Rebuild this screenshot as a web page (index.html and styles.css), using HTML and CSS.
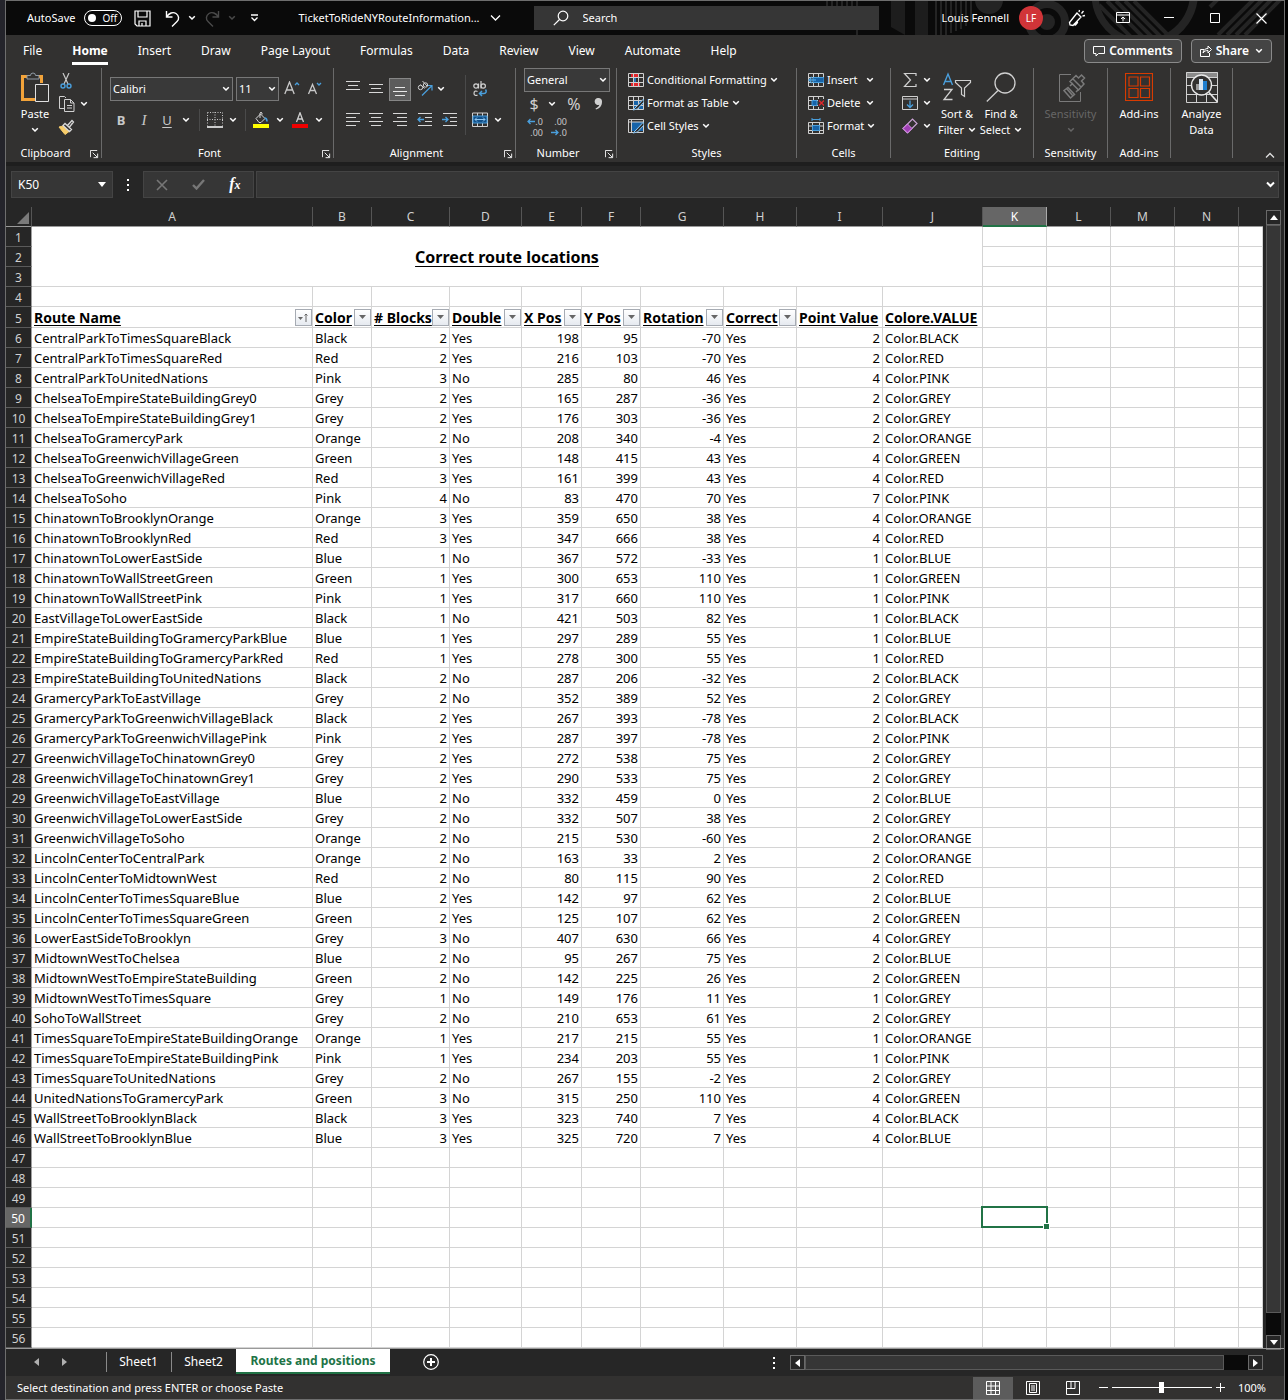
FILE: index.html
```html
<!DOCTYPE html>
<html lang="en">
<head>
<meta charset="utf-8">
<meta name="viewport" content="width=device-width, initial-scale=1">
<title>TicketToRideNYRouteInformation - Excel</title>
<link rel="stylesheet" href="styles.css">
</head>
<body>
<svg class="defs" aria-hidden="true">
  <symbol id="chev" viewBox="0 0 8 6"><path d="M1.2 1.2 4 4l2.800-2.800" fill="none" stroke="currentColor" stroke-width="1.500"/></symbol>
  <symbol id="launch" viewBox="0 0 10 10"><path d="M.5 8V.5H8M3 3l5 5M8.500 4v4.500H4" fill="none" stroke="currentColor"/></symbol>
  <symbol id="table" viewBox="0 0 16 16"><path d="M.5 1.500h15v13H.5zM.5 5.500h15M.5 10.500h15M5.500 1.500v13M10.500 1.500v13" fill="none" stroke="#d0d0d0"/></symbol>
</svg>

<div class="window">
  <header class="titlebar">
    <svg class="pattern" viewBox="0 0 470 34" aria-hidden="true">
      <g fill="none" stroke="#242424">
        <path d="M13 0v6M18 0v6M23 0v6M28 0v6M33 0v6M38 0v6M43 0v34" stroke-width="2"/>
        <path d="M122 0v34M127 0v34M132 0v34M137 0v32M142 0v30M147 0v28M152 0v25M157 0v21" stroke-width="2"/>
        <circle cx="233" cy="21" r="18" stroke-width="8"/>
        <path d="M285 4l34 34M293 0l38 38M302 0l38 38M311 0l38 38M320 0l38 38" stroke-width="4"/>
        <path d="M281-6a48 48 0 0 0 30 44" stroke-width="7"/>
        <path d="M380-6a50 50 0 0 1-30 44" stroke-width="8"/>
        <path d="M396 6l8-8M404 34l38-38M413 34l38-38M422 34l38-38M431 34l38-38" stroke-width="4"/>
      </g>
      <path d="M77 0h14v34l-14-8zM101 0h13v34h-13z" fill="#1d1d1d"/>
      <circle cx="175" cy="-1" r="14" fill="#242424"/><circle cx="233" cy="21" r="8" fill="#242424"/>
    </svg>
    <label class="autosave">AutoSave <span class="switch"><input type="checkbox" role="switch"><i></i><span>Off</span></span></label>
    <button class="tb w-save" aria-label="Save"><svg width="17" height="17" viewBox="0 0 17 17" fill="none" stroke="#fff" stroke-width="1.200"><path d="M1 1h15v15H3l-2-2zM4 1v6h9V1M5 16v-5h7v5M8 13v3"/></svg></button>
    <button class="tb w-undo" aria-label="Undo"><svg width="15" height="17" viewBox="0 0 15 17" fill="none" stroke="#fff" stroke-width="1.400"><path d="M1.500 1v6h6M1.500 7C4 3 8 1.500 11 3.500s3.500 5.500 1 8L7 16.500"/></svg></button>
    <button class="tb w-chev" aria-label="Undo options"><svg width="8" height="6"><use href="#chev"/></svg></button>
    <button class="tb w-undo dim" aria-label="Redo"><svg width="15" height="17" viewBox="0 0 15 17" fill="none" stroke="#4a4a4a" stroke-width="1.400"><path d="M13.500 1v6h-6M13.500 7C11 3 7 1.500 4 3.500s-3.500 5.500-1 8L8 16.500"/></svg></button>
    <button class="tb w-chev dim" aria-label="Redo options"><svg width="8" height="6"><use href="#chev"/></svg></button>
    <button class="tb w-custom" aria-label="Customize Quick Access Toolbar"><svg width="9" height="8" viewBox="0 0 9 8" fill="none" stroke="#fff" stroke-width="1.300"><path d="M1 1h7M1.500 3.500l3 3 3-3"/></svg></button>
    <button class="filename">TicketToRideNYRouteInformation...<svg width="11" height="8" viewBox="0 0 11 8" fill="none" stroke="#fff" stroke-width="1.300"><path d="M1 1.500 5.500 6 10 1.500"/></svg></button>
    <label class="search"><svg width="16" height="16" viewBox="0 0 16 16" fill="none" stroke="#fff" stroke-width="1.200"><circle cx="10" cy="6" r="4.800"/><path d="M6.500 9.500.8 15.200"/></svg><input type="search" placeholder="Search" aria-label="Search"></label>
    <div class="account">
      <span>Louis Fennell</span><span class="avatar">LF</span>
      <button class="tb w-sys" aria-label="Coming soon"><svg width="18" height="18" viewBox="0 0 18 18" fill="none" stroke="#fff" stroke-width="1.300"><path d="M9 4 1.500 13.500 2 16l3 .500L13 8zM5.500 15.500l2 .5 2-2.500-.5-1.500M11 3l.5-2M13.500 4.500l2-2.500M14.500 7l2.500-.5"/></svg></button>
      <button class="tb w-sys" aria-label="Ribbon display options"><svg width="14" height="12" viewBox="0 0 14 12" fill="none" stroke="#fff"><path d="M.5.5h13v10H.5zM.5 3h13M7 9.500V5M5 7l2-2 2 2"/></svg></button>
      <button class="tb w-sys" aria-label="Minimize"><svg width="10" height="10" viewBox="0 0 10 10" stroke="#fff"><path d="M0 4.500h10"/></svg></button>
      <button class="tb w-sys" aria-label="Maximize"><svg width="10" height="10" viewBox="0 0 10 10" fill="none" stroke="#fff"><path d="M.5.5h9v9h-9z"/></svg></button>
      <button class="tb w-sys" aria-label="Close"><svg width="11" height="11" viewBox="0 0 11 11" stroke="#fff" stroke-width="1.200"><path d="M.5.5l10 10M10.500.5l-10 10"/></svg></button>
    </div>
  </header>

  <nav class="tabs" aria-label="Ribbon tabs">
    <a href="#file">File</a><a href="#home" class="on" aria-current="page">Home</a><a href="#insert">Insert</a><a href="#draw">Draw</a><a href="#layout">Page Layout</a><a href="#formulas">Formulas</a><a href="#data">Data</a><a href="#review">Review</a><a href="#view">View</a><a href="#automate">Automate</a><a href="#help">Help</a>
    <div class="tabs-right">
      <button class="pill"><svg width="12" height="12" viewBox="0 0 12 12" fill="none" stroke="#fff"><path d="M.5 1.500h11v7h-6L3 11V8.500H.5z"/></svg>Comments</button>
      <button class="pill"><svg width="12" height="12" viewBox="0 0 12 12" fill="none" stroke="#fff"><path d="M4 4.500H.5v7h9V8M3 8c.5-3 2-4.500 5-4.500V1l3.500 3.500L8 8V5.500C6 5.500 4.500 6 3 8z"/></svg>Share<svg class="push" width="8" height="6"><use href="#chev"/></svg></button>
    </div>
  </nav>

  <section class="ribbon" aria-label="Home">
    <div class="group g-clip">
      <div class="body clip">
        <button class="big"><svg width="30" height="32" viewBox="0 0 30 32" fill="none"><path d="M7.500 5.500H2.500v23h13" stroke="#f2a33a" stroke-width="3"/><path d="M17 5.500h4.500V12" stroke="#f2a33a" stroke-width="3"/><path d="M7 8V4.500h3.500a2.500 2.500 0 0 1 5 0H19V8z" fill="#323130" stroke="#8f9aa5"/><path d="M15.500 13.500h13v17h-13z" fill="#323130" stroke="#e0e0e0"/></svg><span>Paste</span><svg width="8" height="6"><use href="#chev"/></svg></button>
        <div class="stack">
          <button class="ic" aria-label="Cut"><svg width="16" height="16" viewBox="0 0 16 16" fill="none"><path d="M5 0l5 11M11 0 6 11" stroke="#c8c8c8" stroke-width="1.200"/><circle cx="5" cy="13" r="2" stroke="#4a9fdc" stroke-width="1.400"/><circle cx="11" cy="13" r="2" stroke="#4a9fdc" stroke-width="1.400"/></svg></button><span></span>
          <button class="ic" aria-label="Copy"><svg width="17" height="16" viewBox="0 0 17 16" fill="none" stroke="#d0d0d0"><path d="M6 12.500H1.500V.5h5L8 2M6.500 3.500h6l3.500 3.500v8.500H6.500zM12.500 3.500V7H16M9 9.500h5M9 12h5"/></svg></button><button class="ic" aria-label="Copy options"><svg width="8" height="6"><use href="#chev"/></svg></button>
          <button class="ic" aria-label="Format Painter"><svg width="17" height="16" viewBox="0 0 17 16" fill="none"><path d="M1 8l4-1 6 5.500-4 3z" fill="#f7cd6b" stroke="#f7cd6b"/><path d="M5 6.500l6.500 6 2-2-6.500-6zM9.500 6.500 14 1.500l1.500 1.500-4 5" stroke="#d8d8d8" stroke-width="1.300"/></svg></button><span></span>
        </div>
      </div>
      <div class="cap more"><span>Clipboard</span><button aria-label="Clipboard settings"><svg width="9" height="9"><use href="#launch"/></svg></button></div>
    </div>

    <div class="group g-font">
      <div class="body">
        <div class="fontrow">
          <span class="combo"><select aria-label="Font"><option>Calibri</option></select><svg width="8" height="6"><use href="#chev"/></svg></span>
          <span class="combo"><select aria-label="Font size"><option>11</option></select><svg width="8" height="6"><use href="#chev"/></svg></span>
          <button class="ic" aria-label="Increase font size"><svg width="16" height="16" viewBox="0 0 16 16" fill="none"><path d="M.8 13 5.500 1 10.200 13M2.500 9h6" stroke="#c8c8c8" stroke-width="1.300"/><path d="M11 4l2-2 2 2" stroke="#4a9fdc" stroke-width="1.300"/></svg></button>
          <button class="ic" aria-label="Decrease font size"><svg width="16" height="16" viewBox="0 0 16 16" fill="none"><path d="M1.500 13 5.500 3.500 9.500 13M3 9.500h5" stroke="#c8c8c8" stroke-width="1.300"/><path d="M10 2l2 2 2-2" stroke="#4a9fdc" stroke-width="1.300"/></svg></button>
        </div>
        <div class="fontrow2">
          <button class="ic b">B</button><button class="ic i">I</button><button class="ic u">U</button><button class="ic" aria-label="Underline options"><svg width="8" height="6"><use href="#chev"/></svg></button><hr>
          <button class="ic" aria-label="Borders"><svg width="16" height="16" viewBox="0 0 16 16" fill="none" stroke="#c8c8c8"><path d="M.5.5h15M.5.5v13M15.500.5v13M8 0v14M0 7.500h16" stroke-dasharray="1 1.500"/><path d="M0 15h16" stroke="#fff" stroke-width="1.500"/></svg></button><button class="ic" aria-label="Border options"><svg width="8" height="6"><use href="#chev"/></svg></button><hr>
          <button class="ic" aria-label="Fill color"><svg width="16" height="16" viewBox="0 0 16 16" fill="none"><path d="M3 6.500 7.500 2l4.500 4.500-4 4H6zM7 6V1a1.200 1.200 0 0 1 2 0v1.500" stroke="#d8d8d8"/><path d="M11.500 6c1.500 0 2.500 1.500 2.500 3.500" stroke="#4a9fdc" stroke-width="1.600"/><path d="M0 12h16v4H0z" fill="#ff0"/></svg></button><button class="ic" aria-label="Fill options"><svg width="8" height="6"><use href="#chev"/></svg></button>
          <button class="ic" aria-label="Font color"><svg width="16" height="16" viewBox="0 0 16 16" fill="none"><path d="M4.500 10 8 .8 11.500 10M5.800 7h4.500" stroke="#d0d0d0" stroke-width="1.300"/><path d="M0 12h16v4H0z" fill="#f00000"/></svg></button><button class="ic" aria-label="Font color options"><svg width="8" height="6"><use href="#chev"/></svg></button>
        </div>
      </div>
      <div class="cap more"><span>Font</span><button aria-label="Font settings"><svg width="9" height="9"><use href="#launch"/></svg></button></div>
    </div>

    <div class="group g-align">
      <div class="body alignbody">
        <button class="ic" aria-label="Top align"><svg width="14" height="16" viewBox="0 0 14 16" stroke="#d8d8d8"><path d="M0 .5h14M2 4.500h10M0 8.500h14"/></svg></button>
        <button class="ic" aria-label="Middle align"><svg width="14" height="16" viewBox="0 0 14 16" stroke="#d8d8d8"><path d="M0 3.500h14M2 7.500h10M0 11.500h14"/></svg></button>
        <button class="ic pressed" aria-label="Bottom align" aria-pressed="true"><svg width="14" height="16" viewBox="0 0 14 16" stroke="#e8e8e8"><path d="M2 6.500h10M0 10.500h14M2 14.500h10"/></svg></button>
        <button class="ic" aria-label="Orientation"><svg width="16" height="16" viewBox="0 0 16 16" fill="none"><path d="M5 14.500 14.500 5M10 4.500h5v5" stroke="#4a9fdc" stroke-width="1.200"/><g stroke="#d0d0d0"><circle cx="3.500" cy="6.500" r="2.200"/><path d="M3.500 3.500l4 4"/><circle cx="8.500" cy="4" r="2.200"/><path d="M5.500 0l4.500 5"/></g></svg></button>
        <button class="ic start" aria-label="Orientation options"><svg width="8" height="6"><use href="#chev"/></svg></button>
        <hr class="tall">
        <button class="ic" aria-label="Wrap text"><svg width="16" height="18" viewBox="0 0 16 18" fill="none"><g stroke="#d0d0d0" stroke-width="1.200"><circle cx="4" cy="6" r="2.200"/><path d="M6.500 3.500v5M9 1v7.500"/><circle cx="11.200" cy="6" r="2.200"/><path d="M5.500 11.500c-1.500-1-3.500-.5-3.500 1.700s2 2.800 3.500 1.800"/></g><path d="M13.500 9.500c1.500 2 .5 4-1.500 4H7.500M10 11l-2.500 2.500L10 16" stroke="#4a9fdc" stroke-width="1.500"/></svg></button><span></span>

        <button class="ic" aria-label="Align left"><svg width="14" height="14" viewBox="0 0 14 14" stroke="#d8d8d8"><path d="M0 .5h14M0 4.500h10M0 8.500h14M0 12.500h10"/></svg></button>
        <button class="ic" aria-label="Center"><svg width="14" height="14" viewBox="0 0 14 14" stroke="#d8d8d8"><path d="M0 .5h14M2 4.500h10M0 8.500h14M2 12.500h10"/></svg></button>
        <button class="ic" aria-label="Align right"><svg width="14" height="14" viewBox="0 0 14 14" stroke="#d8d8d8"><path d="M0 .5h14M4 4.500h10M0 8.500h14M4 12.500h10"/></svg></button>
        <button class="ic" aria-label="Decrease indent"><svg width="15" height="14" viewBox="0 0 15 14" fill="none" stroke="#d8d8d8"><path d="M1 .5h14M8 4.500h7M8 8.500h7M1 12.500h14"/><path d="M7 6.500H1M3.500 4 1 6.500 3.500 9" stroke="#4a9fdc" stroke-width="1.300"/></svg></button>
        <button class="ic" aria-label="Increase indent"><svg width="15" height="14" viewBox="0 0 15 14" fill="none" stroke="#d8d8d8"><path d="M1 .5h14M8 4.500h7M8 8.500h7M1 12.500h14"/><path d="M0 6.500h6M3.500 4 6 6.500 3.500 9" stroke="#4a9fdc" stroke-width="1.300"/></svg></button>
        <button class="ic" aria-label="Merge and center"><svg width="16" height="16" viewBox="0 0 16 16" fill="none"><path d="M.5 1h15v13.500H.5zM5.500 1v3M10.500 1v3M5.500 11v3.500M10.500 11v3.500" stroke="#d0d0d0"/><path d="M1 4h14v7H1z" fill="#12518a" stroke="#4a9fdc"/><path d="M3 7.500h10M5 5.500l-2 2 2 2M11 5.500l2 2-2 2" stroke="#8fc6f0"/></svg></button>
        <button class="ic" aria-label="Merge options"><svg width="8" height="6"><use href="#chev"/></svg></button>
      </div>
      <div class="cap more"><span>Alignment</span><button aria-label="Alignment settings"><svg width="9" height="9"><use href="#launch"/></svg></button></div>
    </div>

    <div class="group g-num">
      <div class="body numbody">
        <span class="combo"><select aria-label="Number format"><option>General</option></select><svg width="8" height="6"><use href="#chev"/></svg></span>
        <div class="numrow"><button class="ic sym">$</button><button class="ic" aria-label="Accounting options"><svg width="8" height="6"><use href="#chev"/></svg></button><button class="ic sym">%</button><button class="ic" aria-label="Comma style"><svg width="9" height="12" viewBox="0 0 9 12"><path d="M4.500 0a3.500 3.500 0 0 1 3.500 3.700C8 8 5.500 10.500 2 11.500l-.5-1C3.500 9.500 5 8.500 5.300 6.800A3.500 3.500 0 1 1 4.500 0z" fill="#d0d0d0"/></svg></button></div>
        <div class="numrow2">
          <button class="ic dec" aria-label="Increase decimal"><svg width="8" height="7" viewBox="0 0 8 7" fill="none" stroke="#4a9fdc" stroke-width="1.300"><path d="M8 3.500H1M3.500 1 1 3.500 3.500 6"/></svg><span>.0</span><span class="wide">.00</span></button>
          <button class="ic dec" aria-label="Decrease decimal"><span class="wide">.00</span><svg width="8" height="7" viewBox="0 0 8 7" fill="none" stroke="#4a9fdc" stroke-width="1.300"><path d="M0 3.500h7M4.500 1 7 3.500 4.500 6"/></svg><span>.0</span></button>
        </div>
      </div>
      <div class="cap more"><span>Number</span><button aria-label="Number settings"><svg width="9" height="9"><use href="#launch"/></svg></button></div>
    </div>

    <div class="group g-styles">
      <div class="body list">
        <button class="item"><svg width="16" height="16" viewBox="0 0 16 16"><path d="M3 1.500h7v4H3zM3 10.500h9v4H3z" fill="#e0262c"/><path d="M5 6h3v4H5z" fill="#2374b8"/><use href="#table"/></svg>Conditional Formatting<svg width="8" height="6"><use href="#chev"/></svg></button>
        <button class="item"><svg width="16" height="16" viewBox="0 0 16 16"><path d="M5 5h11v10H5z" fill="#1763a8"/><use href="#table"/><path d="M15.500 4 8 12l-3 3 4.500-1L16 7z" fill="#323130" stroke="#8fc6f0"/></svg>Format as Table<svg width="8" height="6"><use href="#chev"/></svg></button>
        <button class="item"><svg width="16" height="16" viewBox="0 0 16 16"><path d="M3 4h12v9H3z" fill="#1763a8"/><path d="M.5 1.500h15v13H.5zM.5 4h15M3.500 1.500v13" fill="none" stroke="#d0d0d0"/><path d="M15.500 4 8 12l-3 3 4.500-1L16 7z" fill="#323130" stroke="#8fc6f0"/></svg>Cell Styles<svg width="8" height="6"><use href="#chev"/></svg></button>
      </div>
      <div class="cap"><span>Styles</span></div>
    </div>

    <div class="group g-cells">
      <div class="body list">
        <button class="item"><svg width="16" height="16" viewBox="0 0 16 16" fill="none"><use href="#table"/><path d="M5 5.500h11v5H5z" fill="#1763a8" stroke="#4a9fdc"/><path d="M8 8H1M4 5 1 8l3 3" stroke="#4a9fdc" stroke-width="1.300"/></svg>Insert<svg class="push" width="8" height="6"><use href="#chev"/></svg></button>
        <button class="item"><svg width="16" height="16" viewBox="0 0 16 16" fill="none"><use href="#table"/><path d="M4 5.500h5v5H4z" fill="#1763a8" stroke="#4a9fdc"/><path d="M10 4h6v8h-6z" fill="#323130"/><path d="M11 5.500l5 5M16 5.500l-5 5" stroke="#e0262c" stroke-width="1.300"/></svg>Delete<svg class="push" width="8" height="6"><use href="#chev"/></svg></button>
        <button class="item"><svg width="16" height="16" viewBox="0 0 16 16" fill="none"><path d="M.5 4.500h15v11H.5zM.5 8h15M.5 12.500h15M4.500 4.500v11M11.500 4.500v11" stroke="#d0d0d0"/><path d="M4.500 7.500h7v5h-7z" fill="#1763a8" stroke="#4a9fdc"/><path d="M4 0v3M12 0v3M4 1.500h8" stroke="#4a9fdc"/></svg>Format<svg class="push" width="8" height="6"><use href="#chev"/></svg></button>
      </div>
      <div class="cap"><span>Cells</span></div>
    </div>

    <div class="group g-edit">
      <div class="body editbody">
        <div class="list">
          <button class="item" aria-label="AutoSum"><svg width="16" height="16" viewBox="0 0 16 16" fill="none" stroke="#d0d0d0" stroke-width="1.200"><path d="M14 4V1.500H2.500l6 6.500-6 6.500H14V12"/></svg><svg width="8" height="6"><use href="#chev"/></svg></button>
          <button class="item" aria-label="Fill"><svg width="16" height="16" viewBox="0 0 16 16" fill="none"><path d="M.5 1.500h15v13H.5zM.5 4h15" stroke="#d0d0d0"/><path d="M8 5.500V12M5 9.500l3 3 3-3" stroke="#4a9fdc" stroke-width="1.300"/></svg><svg width="8" height="6"><use href="#chev"/></svg></button>
          <button class="item" aria-label="Clear"><svg width="16" height="16" viewBox="0 0 16 16" fill="none"><path d="M1 10.500 10.500 1 15 5.500 5.500 15z" stroke="#c9a3d4" stroke-width="1.200"/><path d="M1 10.500l4.500-4.500L10 10.500 5.500 15z" fill="#a03fb5" stroke="#d890e8"/></svg><svg width="8" height="6"><use href="#chev"/></svg></button>
        </div>
        <button class="big"><svg width="30" height="32" viewBox="0 0 30 32" fill="none"><path d="M1.500 14 6 3l4.500 11M3 10.500h6" stroke="#4a9fdc" stroke-width="1.400"/><path d="M2 18.500h8L2 28.500h8.500" stroke="#d0d0d0" stroke-width="1.300"/><path d="M13.500 9.500h15v2L22.500 17v8.500l-3-2V17l-6-5.500z" stroke="#d0d0d0" stroke-width="1.200"/></svg><span>Sort &amp;</span><span>Filter <svg width="8" height="6"><use href="#chev"/></svg></span></button>
        <button class="big"><svg width="30" height="32" viewBox="0 0 30 32" fill="none" stroke="#d0d0d0" stroke-width="1.300"><circle cx="19" cy="12" r="10"/><path d="M12 19.500.8 30.500"/></svg><span>Find &amp;</span><span>Select <svg width="8" height="6"><use href="#chev"/></svg></span></button>
      </div>
      <div class="cap"><span>Editing</span></div>
    </div>

    <div class="group g-sens">
      <div class="body"><button class="big off" disabled><svg width="30" height="32" viewBox="0 0 30 32" fill="none" stroke="#7a7a7a"><path d="M15 3.500H3.500v27h21V21"/><path d="M8 19.500l4-3 6.500 7-4 3.500z M11 18l6 7 M14 15l3-3 M20 21l2-2M14 10.500l6-6 2.500 2.500 3-3 3 3-3 3 2.500 3-5.500 6z M17 8l8 8" stroke-width="1.500"/></svg><span>Sensitivity</span><svg width="8" height="6"><use href="#chev"/></svg></button></div>
      <div class="cap"><span>Sensitivity</span></div>
    </div>
    <div class="group g-add">
      <div class="body"><button class="big"><svg width="28" height="32" viewBox="0 0 28 32" fill="none" stroke="#d83b01" stroke-width="1.200"><path d="M.5 2.500h27v27H.5zM4 6h9v9H4zM15.500 6h9v9h-9zM4 17.500h9v9H4zM15.500 17.500h9v9h-9z"/></svg><span>Add-ins</span></button></div>
      <div class="cap"><span>Add-ins</span></div>
    </div>
    <div class="group g-data">
      <div class="body"><button class="big"><svg width="32" height="32" viewBox="0 0 32 32" fill="none"><path d="M0 1h32v5H0z" fill="#8a8a8a"/><path d="M.5 1.500h31v30H.5zM0 6.500h32M0 14.500h6M26 14.500h6M0 23.500h32M10.500 23v8M20.500 23v8" stroke="#d0d0d0"/><circle cx="15.500" cy="14" r="10" fill="#323130" stroke="#e8e8e8" stroke-width="1.400"/><path d="M10 13h3v6h-3z" fill="#9a9a9a"/><path d="M13 8h4v11h-4z" fill="#d8e6f2"/><path d="M17 10h4v9h-4z" fill="#1f7fd0"/><path d="M23 21.500l8.500 9.500" stroke="#e8e8e8" stroke-width="1.600"/></svg><span>Analyze</span><span>Data</span></button></div>
      <div class="cap"></div>
    </div>
    <button class="collapse" aria-label="Collapse the ribbon"><svg width="10" height="7" viewBox="0 0 10 7" fill="none" stroke="#e0e0e0" stroke-width="1.300"><path d="M1 5.500l4-4 4 4"/></svg></button>
  </section>

  <div class="formula">
    <span class="namebox"><input value="K50" aria-label="Name box"><svg width="8" height="5" viewBox="0 0 8 5"><path d="M0 0h8L4 5z" fill="#fff"/></svg></span>
    <svg class="dots" width="3" height="12" viewBox="0 0 3 12" fill="#fff"><path d="M0 0h2v2H0zM0 5h2v2H0zM0 10h2v2H0z"/></svg>
    <div class="fxbox">
      <button aria-label="Cancel"><svg width="12" height="12" viewBox="0 0 12 12" stroke="#777" stroke-width="1.600"><path d="M1 1l10 10M11 1 1 11"/></svg></button>
      <button aria-label="Enter"><svg width="13" height="11" viewBox="0 0 13 11" fill="none" stroke="#777" stroke-width="2.400"><path d="M1 6l3.500 3.500L12 1"/></svg></button>
      <button class="fx">f<small>x</small></button>
    </div>
    <span class="fbar"><input aria-label="Formula bar"><svg width="9" height="7" viewBox="0 0 9 7" fill="none" stroke="#fff" stroke-width="2"><path d="M1 1.500 4.500 5 8 1.500"/></svg></span>
  </div>

  <main class="sheet">
    <table class="grid" id="grid">
      <colgroup><col class="c-n"><col class="c-a"><col class="c-b"><col class="c-c"><col class="c-d"><col class="c-e"><col class="c-b"><col class="c-g"><col class="c-h"><col class="c-i"><col class="c-j"><col class="c-k"><col class="c-k"><col class="c-k"><col class="c-k"><col></colgroup>
      <thead><tr><th class="corner"><svg width="12" height="12" viewBox="0 0 12 12"><path d="M12 0v12H0z" fill="#7a7a7a"/></svg></th><th>A</th><th>B</th><th>C</th><th>D</th><th>E</th><th>F</th><th>G</th><th>H</th><th>I</th><th>J</th><th class="sel">K</th><th>L</th><th>M</th><th>N</th><th class="last"></th></tr></thead>
      <tbody></tbody>
    </table>
    <div class="vscroll">
      <button aria-label="Scroll up"><svg width="8" height="5" viewBox="0 0 8 5"><path d="M0 5h8L4 0z" fill="#fff"/></svg></button>
      <div class="thumb"></div><div class="gap"></div>
      <button aria-label="Scroll down"><svg width="8" height="5" viewBox="0 0 8 5"><path d="M0 0h8L4 5z" fill="#fff"/></svg></button>
    </div>
  </main>

  <div class="sheets">
    <button class="nav" aria-label="Previous sheet"><svg width="5" height="8" viewBox="0 0 5 8"><path d="M5 0v8L0 4z" fill="#b0b0b0"/></svg></button>
    <button class="nav" aria-label="Next sheet"><svg width="5" height="8" viewBox="0 0 5 8"><path d="M0 0v8l5-4z" fill="#b0b0b0"/></svg></button>
    <button class="sheet-tab">Sheet1</button><button class="sheet-tab">Sheet2</button><button class="sheet-tab active">Routes and positions</button>
    <button class="add" aria-label="New sheet"><svg width="16" height="16" viewBox="0 0 16 16" fill="none" stroke="#fff"><circle cx="8" cy="8" r="7.300" stroke-width="1.200"/><path d="M4 8h8M8 4v8" stroke-width="2"/></svg></button>
    <svg class="dots" width="3" height="12" viewBox="0 0 3 12" fill="#fff"><path d="M0 0h2v2H0zM0 5h2v2H0zM0 10h2v2H0z"/></svg>
    <div class="hscroll">
      <button aria-label="Scroll left"><svg width="5" height="8" viewBox="0 0 5 8"><path d="M5 0v8L0 4z" fill="#fff"/></svg></button>
      <div class="thumb"></div><div class="gap"></div>
      <button aria-label="Scroll right"><svg width="5" height="8" viewBox="0 0 5 8"><path d="M0 0v8l5-4z" fill="#fff"/></svg></button>
    </div>
  </div>

  <footer class="status">
    <span class="msg">Select destination and press ENTER or choose Paste</span>
    <button class="view on" aria-label="Normal view"><svg width="14" height="14" viewBox="0 0 14 14" fill="none" stroke="#fff"><path d="M.5.500h13v13H.5zM5 .5v13M9.500.5v13M.5 5h13M.5 9.500h13"/></svg></button>
    <button class="view" aria-label="Page layout view"><svg width="14" height="14" viewBox="0 0 14 14" fill="none" stroke="#fff"><path d="M.5.500h13v13H.5zM3.500 2.500h7v9h-7zM5 5h4M5 7h4M5 9h4"/></svg></button>
    <button class="view" aria-label="Page break preview"><svg width="14" height="14" viewBox="0 0 14 14" fill="none" stroke="#fff"><path d="M.5.500h13v13H.5zM5 .5v7M9 .5v7M.5 7.500H9"/></svg></button>
    <button class="zoom" aria-label="Zoom out"><svg width="9" height="9" viewBox="0 0 9 9" stroke="#fff"><path d="M0 4.500h9"/></svg></button>
    <input class="slider" type="range" min="0" max="100" value="50" aria-label="Zoom">
    <button class="zoom" aria-label="Zoom in"><svg width="9" height="9" viewBox="0 0 9 9" stroke="#fff"><path d="M0 4.500h9M4.500 0v9"/></svg></button>
    <button class="pct">100%</button>
  </footer>
</div>
<script src="app.js"></script>
</body>
</html>
```
FILE: styles.css
```css
* { box-sizing: border-box; }
body { margin: 0; min-height: 100vh; background: #000; border-left: 5px solid #24242b; color: #fff; font: 11px/16px "Noto Sans", "Open Sans", sans-serif; }
button, input, select { font: inherit; color: inherit; background: none; border: 0; padding: 0; margin: 0; }
button { display: flex; align-items: center; justify-content: center; }
svg { display: block; flex: none; }
a { color: inherit; text-decoration: none; }
.defs { position: absolute; width: 0; height: 0; }
.window { margin-right: 3px; min-height: 100vh; border: 1px solid #6e6e6e; background: #262626; display: flex; flex-direction: column; }

/* title bar */
.titlebar { position: relative; display: flex; align-items: center; height: 34px; background: #0a0a0a; padding-left: 21px; overflow: hidden; }
.titlebar > * { position: relative; flex: none; }
.titlebar > .pattern { position: absolute; right: 0; top: 0; width: 470px; height: 34px; }
.autosave { display: flex; align-items: center; gap: 9px; }
.switch { position: relative; display: flex; align-items: center; width: 38px; height: 16px; border: 1px solid #fff; border-radius: 8px; padding-left: 3px; gap: 6px; font-size: 10px; }
.switch input { position: absolute; inset: 0; opacity: 0; width: 100%; height: 100%; }
.switch i { width: 8px; height: 8px; border-radius: 50%; background: #fff; }
.tb { height: 34px; }
.w-save { width: 40px; }
.w-undo { width: 20px; }
.w-chev { width: 20px; }
.w-custom { width: 24px; }
.dim { color: #4a4a4a; }
.filename { margin-left: 32px; gap: 10px; }
.titlebar > .search { display: flex; align-items: center; flex: 0 1 345px; margin-left: 33px; height: 24px; background: #363636; padding-left: 19px; gap: 14px; }
.search input { width: 100%; outline: 0; }
.search input::placeholder { color: #fff; opacity: 1; }
.account { display: flex; align-items: center; margin-left: auto; }
.avatar { width: 24px; height: 24px; line-height: 24px; margin: 0 11px 0 10px; border-radius: 50%; background: #d13438; text-align: center; font-size: 10px; }
.w-sys { width: 46px; }

/* ribbon tabs */
.tabs { display: flex; align-items: center; gap: 30px; height: 32px; padding: 0 12px 0 17px; background: #323130; font-size: 12px; }
.tabs a { height: 28px; line-height: 28px; border-bottom: 3px solid transparent; }
.tabs .on { font-weight: 700; border-color: #fff; }
.tabs-right { display: flex; gap: 9px; margin-left: auto; }
.pill { height: 24px; padding: 0 8px; gap: 4px; border: 1px solid #8a8a8a; border-radius: 4px; background: #444; font-weight: 600; }
.push { margin-left: auto; }
.pill .push { margin-left: 2px; }

/* ribbon */
.ribbon { display: flex; height: 95px; padding: 1px 0; background: #323130; }
.group { display: flex; flex-direction: column; height: 90px; flex: none; border-right: 1px solid #6a6a6a; }
.body { flex: none; height: 77px; display: flex; flex-direction: column; }
.cap { position: relative; flex: none; height: 16px; text-align: center; white-space: nowrap; }
.more { padding-right: 16px; }
.cap button { position: absolute; right: 2px; top: 5px; }
.ic { height: 22px; color: #fff; }
.g-clip { width: 96px; } .g-font { width: 232px; } .g-align { width: 182px; } .g-num { width: 101px; }
.g-styles { width: 180px; } .g-cells { width: 94px; } .g-edit { width: 143px; } .g-sens { width: 74px; } .g-add { width: 63px; } .g-data { width: 62px; }
.big { flex-direction: column; justify-content: flex-start; width: 100%; padding-top: 3px; }
.big span { display: flex; align-items: center; gap: 4px; white-space: nowrap; }
.big > svg:first-child { margin-bottom: 3px; }
.big > svg:last-child { margin-top: 5px; }
.big.off { color: #666; }
.clip { flex-direction: row; }
.clip .big { width: 44px; margin-left: 7px; }
.stack { display: grid; grid-template-columns: 18px 18px; grid-auto-rows: 23px; padding-top: 2px; }
.fontrow { display: grid; grid-template-columns: 123px 43px 20px 20px; gap: 3px; height: 24px; margin: 9px 0 0 8px; align-items: center; }
.combo { display: grid; align-items: center; height: 24px; background: #393939; border: 1px solid #777; }
.combo > * { grid-area: 1 / 1; }
.combo select { appearance: none; width: 100%; height: 100%; padding-left: 2px; border-radius: 0; }
.combo svg { justify-self: end; margin-right: 2px; pointer-events: none; }
.fontrow2 { display: grid; grid-template-columns: 22px 24px 22px 16px 10px 21px 15px 10px 22px 15px 25px 13px; height: 24px; margin: 7px 0 0 8px; align-items: center; }
hr { width: 1px; height: 22px; margin: 0; border: 0; background: #4a4a4a; justify-self: center; }
.b, .i, .u { color: #c8c8c8; font-size: 13px; }
.b { font-weight: 700; }
.i { font-style: italic; font-family: "Liberation Serif", serif; font-size: 15px; }
.u { text-decoration: underline; text-underline-offset: 2px; }
.alignbody { display: grid; grid-template-columns: 23px 24px 24px 25px 24px 8px 22px 14px; grid-template-rows: 24px 24px; row-gap: 7px; padding: 9px 0 0 7px; align-items: center; }
.pressed { width: 22px; height: 23px; justify-self: center; background: #5c5c5c; border: 1px solid #868686; }
.start { justify-content: flex-start; }
.tall { grid-row: span 2; height: 60px; }
.numbody { padding-left: 8px; padding-right: 6px; }
.numrow { display: grid; grid-template-columns: 20px 16px 28px 20px; margin-top: 1px; }
.numrow2 { display: flex; gap: 8px; margin: 1px 0 0 3px; }
.sym { font-size: 16px; color: #d0d0d0; }
.dec { display: grid; grid-template-columns: 8px 8px; align-items: center; font-size: 9px; line-height: 9px; color: #c8c8c8; }
.dec .wide { grid-column: 1 / 3; text-align: right; }
.list { padding-left: 11px; }
.item { height: 23px; gap: 3px; justify-content: flex-start; white-space: nowrap; width: 100%; }
.g-cells .item { padding-right: 16px; }
.editbody { flex-direction: row; }
.editbody .item { gap: 5px; }
.editbody .big { width: 44px; }
.editbody .big:nth-child(2) { margin-left: 4px; }
.collapse { margin: auto 9px 2px auto; }

/* formula bar */
.formula { display: flex; align-items: center; height: 45px; padding: 0 5px 4px; border-top: 4px solid #1e1e1e; }
.namebox, .fxbox, .fbar { display: flex; align-items: center; height: 27px; background: #363636; border: 1px solid #444; }
.namebox { width: 102px; padding: 0 6px; }
.namebox input { flex: 1; min-width: 0; font-size: 12px; }
.formula .dots { margin: 0 13px 0 14px; }
.fxbox { width: 111px; }
.fxbox button { flex: 1; }
.fx { font: italic 700 16px/16px "Liberation Serif", serif; align-items: baseline; }
.fx small { font-size: 12px; }
.fbar { flex: 1; margin-left: 2px; padding: 0 3px; }
.fbar input { flex: 1; min-width: 0; }

/* grid */
.sheet { display: flex; }
.grid { flex: 1; min-width: 0; table-layout: fixed; width: 100%; border-spacing: 0; color: #000; font-size: 13px; line-height: 17px; }
.c-n { width: 26px; } .c-a { width: 281px; } .c-b { width: 59px; } .c-c { width: 78px; } .c-d { width: 72px; } .c-e { width: 60px; }
.c-g { width: 83px; } .c-h { width: 73px; } .c-i { width: 86px; } .c-j { width: 100px; } .c-k { width: 64px; }
th { height: 20px; padding: 0; font-weight: 400; font-size: 12px; text-align: center; background: #262626; color: #d0d0d0; }
thead th { border-right: 1px solid #555; border-bottom: 1px solid #999; }
thead .corner svg { margin: 3px 2px 0 auto; }
thead .last { border-right: 0; }
thead .sel { background: #666; color: #fff; border-color: #aaa; border-bottom: 2px solid #217346; }
tbody th { padding-top: 2px; border-right: 1px solid #a0a0a0; border-bottom: 1px solid #5a5a5a; }
tbody th.sel { background: #666; color: #fff; border-right: 2px solid #217346; }
td { height: 20px; padding: 2px 2px 0; background: #fff; border-right: 1px solid #d4d4d4; border-bottom: 1px solid #d4d4d4; white-space: nowrap; }
td.num { text-align: right; }
td.title { text-align: center; font-size: 16px; font-weight: 700; text-decoration: underline; text-underline-offset: 3px; }
.heads td, .heads th { height: 21px; }
.heads td { padding: 0 0 0 2px; font-size: 14px; font-weight: 700; }
.head { display: flex; align-items: center; justify-content: space-between; height: 20px; }
.head > span { height: 19px; line-height: 20px; text-decoration: underline; text-underline-offset: 2px; }
.filter { width: 17px; height: 17px; border: 1px solid #a6abb3; background: linear-gradient(#fff, #e6eaf0); }
td.current { position: relative; }
.cursor { position: absolute; inset: -2px -2px -1px -2px; border: 2px solid #217346; z-index: 1; }
.cursor::after { content: ""; position: absolute; right: -3px; bottom: -3px; width: 5px; height: 5px; background: #217346; outline: 1px solid #fff; }
.vscroll { display: flex; flex-direction: column; width: 16px; margin: 3px 2px -2px 3px; }
.vscroll button, .hscroll button { width: 15px; height: 15px; border: 1px solid #6a6a6a; background: #262626; }
.thumb { flex: 1; background: #363636; border: 1px solid #5a5a5a; }
.vscroll .thumb, .vscroll .gap { width: 15px; }
.gap { background: #0a0a0a; flex: none; }
.vscroll .gap { height: 22px; }

/* sheet tabs */
.sheets { display: flex; align-items: flex-start; height: 28px; font-size: 12px; border-top: 1px solid #999; padding-left: 16px; padding-right: 21px; }
.sheets button { height: 26px; }
.nav { width: 28px; }
.sheets .nav + .sheet-tab { margin-left: 28px; }
.sheet-tab { width: 65px; }
.sheet-tab:not(.active)::before { content: ""; width: 1px; height: 20px; margin-right: auto; background: #8a8a8a; }
.sheet-tab:not(.active) { padding-right: 13px; }
.sheets .active { width: 154px; height: 25px; background: #fff; color: #217346; font-weight: 700; border-bottom: 2px solid #217346; }
.add { margin-left: 33px; }
.sheets .dots { margin: 8px 14px 0 auto; }
.sheets .hscroll { display: flex; flex: 0 1 473px; margin-top: 6px; }
.sheets .hscroll button { height: 15px; flex: none; }
.hscroll .gap { width: 24px; }

/* status bar */
.status { display: flex; align-items: center; flex: 1; min-height: 22px; background: #323130; padding: 0 18px 0 11px; }
.msg { margin-right: auto; }
.view { width: 40px; height: 22px; }
.view.on { background: #5c5c5c; }
.zoom { width: 9px; }
.view + .zoom { margin-left: 6px; }
.slider { appearance: none; width: 100px; height: 11px; margin: 0 4px; background: linear-gradient(#fff, #fff) center / 100% 1px no-repeat; }
.slider::-webkit-slider-thumb { appearance: none; width: 5px; height: 11px; background: #fff; }
.pct { margin-left: 13px; }
```
FILE: app.js
```js
// name | colour | blocks | double | x | y | rotation | points
const routes = `CentralParkToTimesSquareBlack|Black|2|Yes|198|95|-70|2
CentralParkToTimesSquareRed|Red|2|Yes|216|103|-70|2
CentralParkToUnitedNations|Pink|3|No|285|80|46|4
ChelseaToEmpireStateBuildingGrey0|Grey|2|Yes|165|287|-36|2
ChelseaToEmpireStateBuildingGrey1|Grey|2|Yes|176|303|-36|2
ChelseaToGramercyPark|Orange|2|No|208|340|-4|2
ChelseaToGreenwichVillageGreen|Green|3|Yes|148|415|43|4
ChelseaToGreenwichVillageRed|Red|3|Yes|161|399|43|4
ChelseaToSoho|Pink|4|No|83|470|70|7
ChinatownToBrooklynOrange|Orange|3|Yes|359|650|38|4
ChinatownToBrooklynRed|Red|3|Yes|347|666|38|4
ChinatownToLowerEastSide|Blue|1|No|367|572|-33|1
ChinatownToWallStreetGreen|Green|1|Yes|300|653|110|1
ChinatownToWallStreetPink|Pink|1|Yes|317|660|110|1
EastVillageToLowerEastSide|Black|1|No|421|503|82|1
EmpireStateBuildingToGramercyParkBlue|Blue|1|Yes|297|289|55|1
EmpireStateBuildingToGramercyParkRed|Red|1|Yes|278|300|55|1
EmpireStateBuildingToUnitedNations|Black|2|No|287|206|-32|2
GramercyParkToEastVillage|Grey|2|No|352|389|52|2
GramercyParkToGreenwichVillageBlack|Black|2|Yes|267|393|-78|2
GramercyParkToGreenwichVillagePink|Pink|2|Yes|287|397|-78|2
GreenwichVillageToChinatownGrey0|Grey|2|Yes|272|538|75|2
GreenwichVillageToChinatownGrey1|Grey|2|Yes|290|533|75|2
GreenwichVillageToEastVillage|Blue|2|No|332|459|0|2
GreenwichVillageToLowerEastSide|Grey|2|No|332|507|38|2
GreenwichVillageToSoho|Orange|2|No|215|530|-60|2
LincolnCenterToCentralPark|Orange|2|No|163|33|2|2
LincolnCenterToMidtownWest|Red|2|No|80|115|90|2
LincolnCenterToTimesSquareBlue|Blue|2|Yes|142|97|62|2
LincolnCenterToTimesSquareGreen|Green|2|Yes|125|107|62|2
LowerEastSideToBrooklyn|Grey|3|No|407|630|66|4
MidtownWestToChelsea|Blue|2|No|95|267|75|2
MidtownWestToEmpireStateBuilding|Green|2|No|142|225|26|2
MidtownWestToTimesSquare|Grey|1|No|149|176|11|1
SohoToWallStreet|Grey|2|No|210|653|61|2
TimesSquareToEmpireStateBuildingOrange|Orange|1|Yes|217|215|55|1
TimesSquareToEmpireStateBuildingPink|Pink|1|Yes|234|203|55|1
TimesSquareToUnitedNations|Grey|2|No|267|155|-2|2
UnitedNationsToGramercyPark|Green|3|No|315|250|110|4
WallStreetToBrooklynBlack|Black|3|Yes|323|740|7|4
WallStreetToBrooklynBlue|Blue|3|Yes|325|720|7|4`.split('\n').map(line => line.split('|'));

const heads = ['Route Name', 'Color', '# Blocks', 'Double', 'X Pos', 'Y Pos', 'Rotation', 'Correct', 'Point Value', 'Colore.VALUE'];
const numeric = [2, 4, 5, 6, 8];
const arrow = '<svg width="7" height="4" viewBox="0 0 7 4"><path d="M0 0h7L3.500 4z" fill="#666"/></svg>';
const sorted = '<svg width="11" height="9" viewBox="0 0 11 9"><path d="M0 4h5L2.500 7z" fill="#666"/><path d="M8 9V1M6.500 2.500 8 1l1.500 1.500" fill="none" stroke="#666"/></svg>';

function filter(column) {
  if (column > 7) return '';
  return `<button class="filter" aria-label="Filter ${heads[column]}">${column ? arrow : sorted}</button>`;
}

function cells(row) {
  if (row === 1) return '<td class="title" colspan="10" rowspan="3">Correct route locations</td>';
  if (row < 4) return '';
  if (row === 5) return heads.map((h, c) => `<td><div class="head"><span>${h}</span>${filter(c)}</div></td>`).join('');
  const r = routes[row - 6];
  if (!r) return '<td></td>'.repeat(10);
  const values = [...r.slice(0, 7), 'Yes', r[7], 'Color.' + r[1].toUpperCase()];
  return values.map((v, c) => `<td${numeric.includes(c) ? ' class="num"' : ''}>${v}</td>`).join('');
}

let html = '';
for (let row = 1; row <= 56; row++) {
  const current = row === 50;
  html += `<tr${row === 5 ? ' class="heads"' : ''}><th${current ? ' class="sel"' : ''}>${row}</th>${cells(row)}`;
  html += current ? '<td class="current"><div class="cursor"></div></td>' : '<td></td>';
  html += '<td></td>'.repeat(4) + '</tr>';
}
document.querySelector('#grid tbody').innerHTML = html;
```
